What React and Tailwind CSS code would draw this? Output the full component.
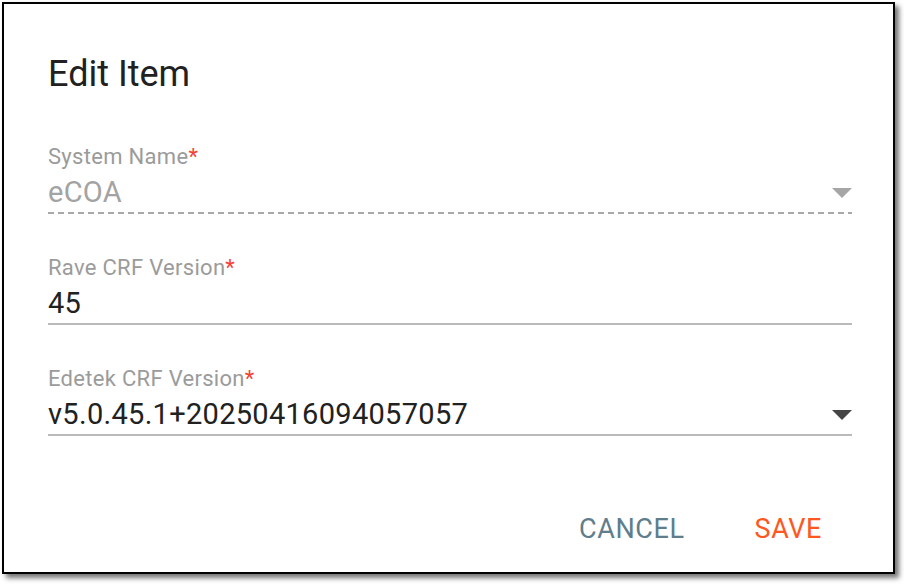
import React from "react";

const font = { fontFamily: "Roboto, 'Liberation Sans', sans-serif" };

function Arrow({ disabled }) {
  return (
    <svg width="20" height="10" viewBox="0 0 20 10" className="mt-[12px] shrink-0">
      <polygon points="0,0 20,0 10,10" fill={disabled ? "#a6a6a6" : "#454545"} />
    </svg>
  );
}

function Field({ label, value, disabled, select, className }) {
  return (
    <div className={className}>
      <div className="h-[24px] leading-[24px] text-[22px] tracking-[0.3px] text-[#9b9b9b]">
        {label}
        <span className="text-[#f44336]">*</span>
      </div>
      <div className="mt-[7px] h-[32px] flex items-start justify-between">
        <span
          className={
            "text-[29px] leading-[32px] tracking-[0.3px] " +
            (disabled ? "text-[#a3a3a3]" : "text-[#212121]")
          }
        >
          {value}
        </span>
        {select && <Arrow disabled={disabled} />}
      </div>
      {disabled ? (
        <div className="mt-[4px] h-[2px] bg-[repeating-linear-gradient(to_right,#a8a8a8_0px,#a8a8a8_6px,transparent_6px,transparent_10px)]" />
      ) : (
        <div className="mt-[4px] h-[2px] bg-[#bababa]" />
      )}
    </div>
  );
}

export default function App() {
  return (
    <div className="w-[904px] h-[584px] bg-white overflow-hidden" style={font}>
      <div className="ml-[2px] mt-[2px] w-[893px] h-[572px] border-2 border-black bg-white shadow-[4px_4px_5px_rgba(0,0,0,0.55)] flex flex-col pl-[44px] pr-[41px]">
        <h2 className="mt-[50px] h-[40px] leading-[40px] text-[36px] font-normal text-[#212121]">
          Edit Item
        </h2>
        <Field className="mt-[51px]" label="System Name" value="eCOA" disabled select />
        <Field className="mt-[42px]" label="Rave CRF Version" value="45" />
        <Field className="mt-[42px]" label="Edetek CRF Version" value="v5.0.45.1+20250416094057057" select />
        <div className="mt-[78px] flex justify-end pr-[30px] gap-[70px] text-[27px] leading-[30px] tracking-[0.6px]">
          <button className="text-[#607d8b]">CANCEL</button>
          <button className="text-[#ff5722]">SAVE</button>
        </div>
      </div>
    </div>
  );
}
